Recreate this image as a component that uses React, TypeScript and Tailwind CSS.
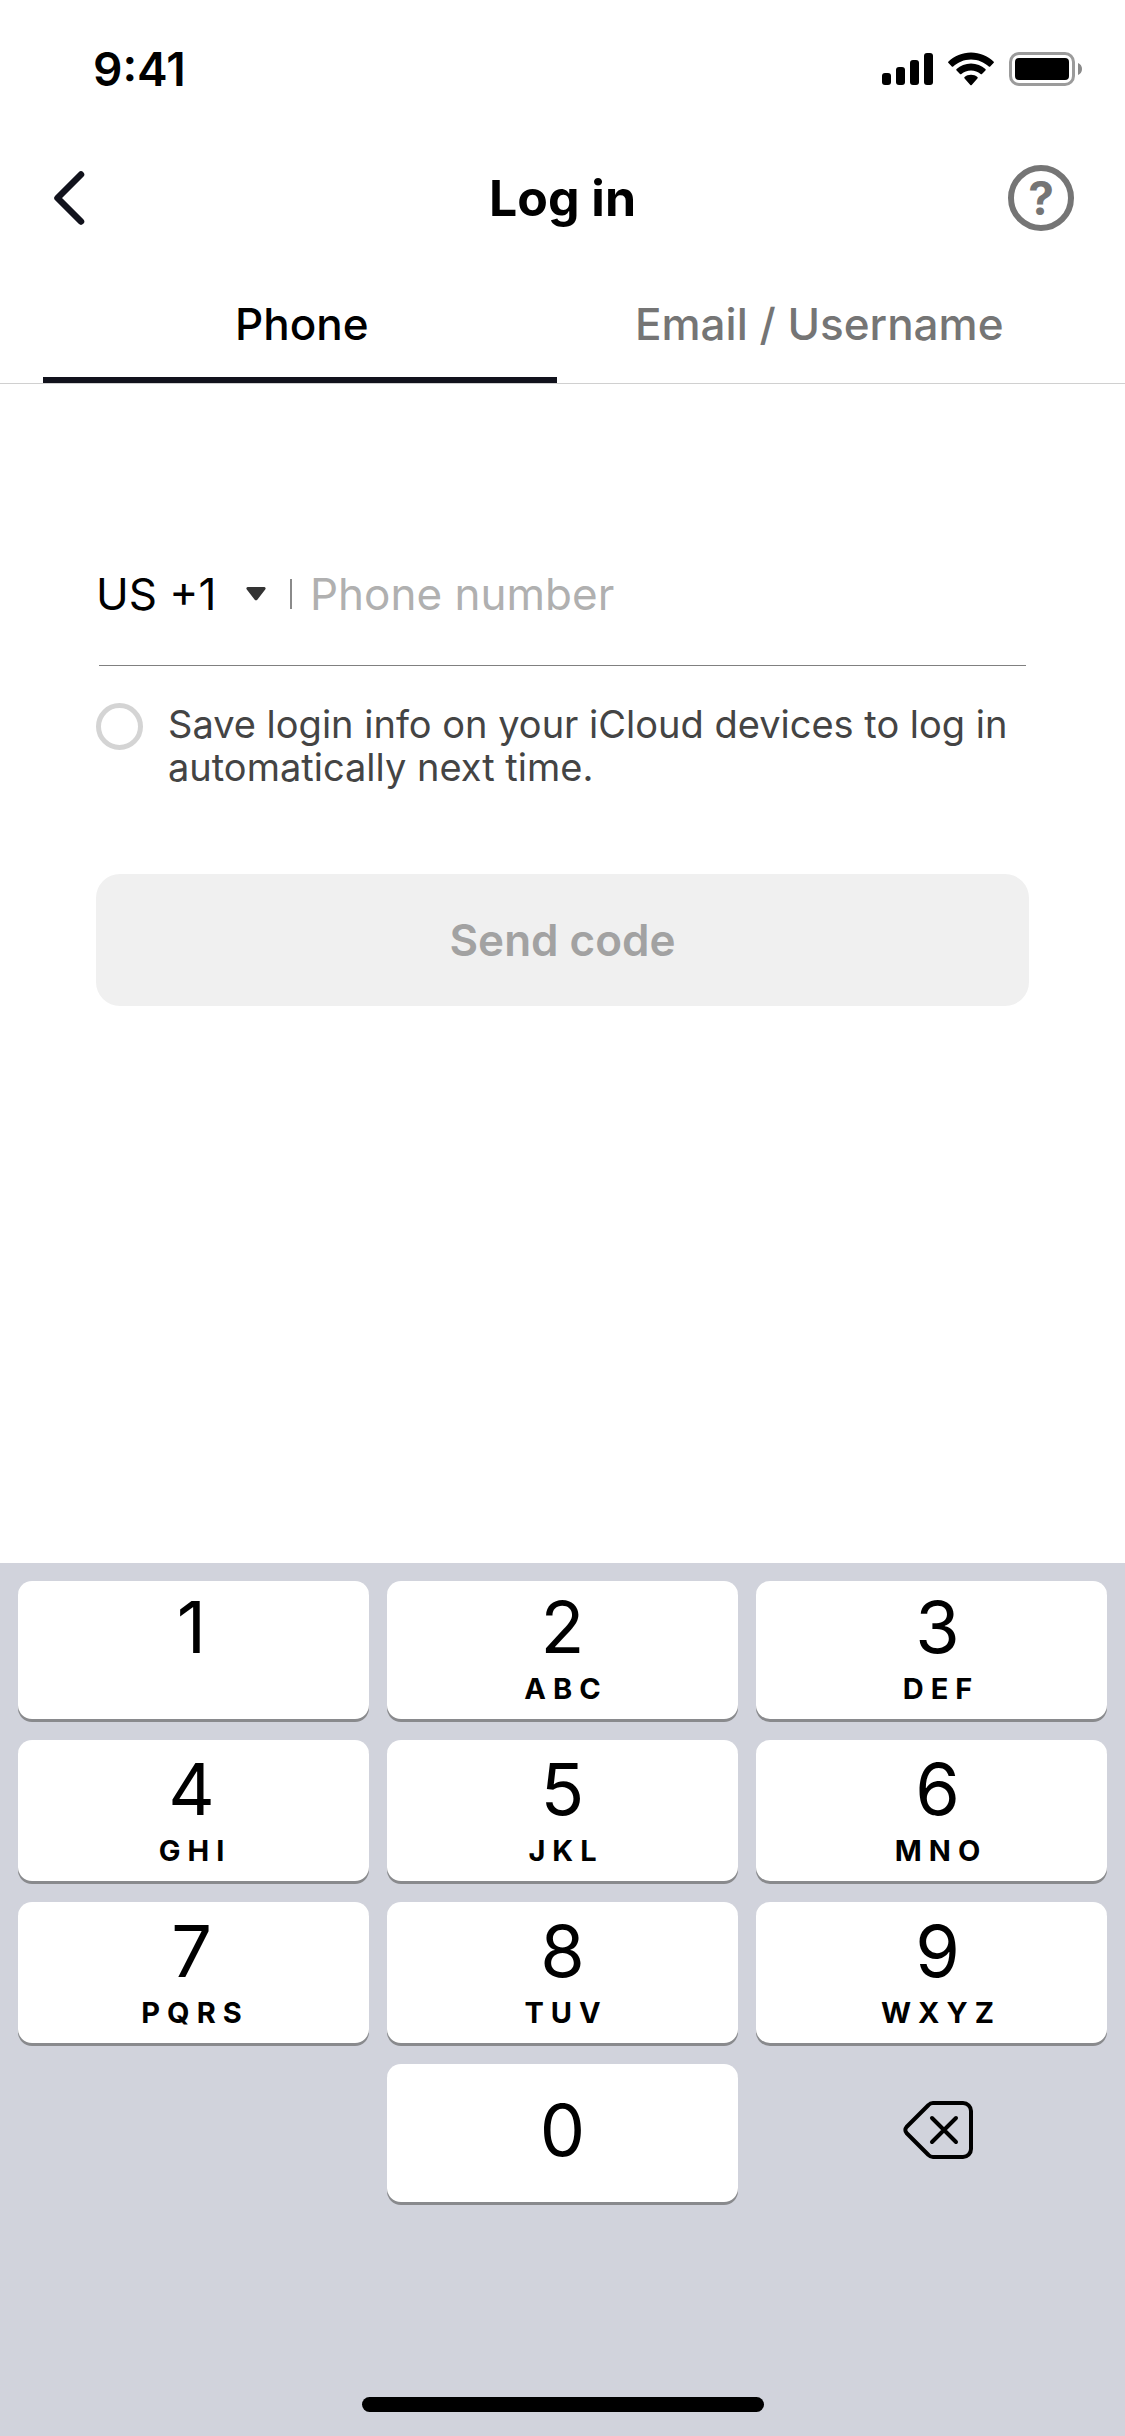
import { useState } from 'react';
import { clsx } from 'clsx';

type Tab = 'phone' | 'email';

interface KeyDef {
  digit: string;
  letters: string;
}

const KEYS: KeyDef[] = [
  { digit: '1', letters: '' },
  { digit: '2', letters: 'ABC' },
  { digit: '3', letters: 'DEF' },
  { digit: '4', letters: 'GHI' },
  { digit: '5', letters: 'JKL' },
  { digit: '6', letters: 'MNO' },
  { digit: '7', letters: 'PQRS' },
  { digit: '8', letters: 'TUV' },
  { digit: '9', letters: 'WXYZ' },
];

function StatusBar() {
  return (
    <div className="flex h-[132px] items-center justify-between pt-1.5 pr-[42px] pl-[93px]">
      <span className="text-[46px] leading-[48px] font-semibold">9:41</span>
      <div className="flex items-center gap-[15px]">
        <svg width="51" height="34" viewBox="0 0 51 34" aria-hidden="true">
          <rect x="0" y="21" width="9" height="12" rx="3" />
          <rect x="14" y="15" width="9" height="18" rx="3" />
          <rect x="28" y="8" width="9" height="25" rx="3" />
          <rect x="42" y="1" width="9" height="32" rx="3" />
        </svg>
        <svg width="46" height="34" viewBox="0 0 46 34" aria-hidden="true">
          <path d="M23 0.5C31.8 0.5 39.7 4 45.5 9.6a1 1 0 0 1 0 1.5L42.2 14.5a1 1 0 0 1-1.4 0C36.1 10.2 29.9 7.4 23 7.4S9.9 10.2 5.2 14.5a1 1 0 0 1-1.4 0L0.5 11.1a1 1 0 0 1 0-1.5C6.3 4 14.2 0.5 23 0.5Z" />
          <path d="M23 11.5c5.6 0 10.6 2.1 14.4 5.6a1 1 0 0 1 0 1.5L34 22a1 1 0 0 1-1.4 0C30 19.8 26.7 18.4 23 18.4S16 19.8 13.4 22a1 1 0 0 1-1.4 0L8.6 18.6a1 1 0 0 1 0-1.5C12.4 13.6 17.4 11.5 23 11.5Z" />
          <path d="M23 22.7c2.5 0 4.7.9 6.4 2.3a1 1 0 0 1 0 1.5L23.7 33a1 1 0 0 1-1.4 0L16.6 26.5a1 1 0 0 1 0-1.5C18.3 23.6 20.5 22.7 23 22.7Z" />
        </svg>
        <svg width="74" height="34" viewBox="0 0 74 34" aria-hidden="true">
          <rect x="1.5" y="1.5" width="63" height="31" rx="8.5" fill="none" stroke="#9b9b9b" strokeWidth="3" />
          <rect x="6" y="6" width="54" height="22" rx="4" />
          <path d="M69 11c2.5 1 4 3.3 4 6s-1.5 5-4 6Z" fill="#8a8a8a" />
        </svg>
      </div>
    </div>
  );
}

function Header() {
  return (
    <header className="grid h-[132px] grid-cols-[1fr_auto_1fr] items-center px-[51px]">
      <button type="button" aria-label="Back" className="justify-self-start">
        <svg width="36" height="60" viewBox="0 0 36 60" fill="none" aria-hidden="true">
          <path d="M30 6.5 6.500 30 30 53.5" stroke="#11121c" strokeWidth="6.500" strokeLinecap="round" strokeLinejoin="round" />
        </svg>
      </button>
      <h1 className="text-[50px] leading-[60px] font-bold">Log in</h1>
      <button
        type="button"
        aria-label="Help"
        className="flex size-[66px] items-center justify-center justify-self-end rounded-full border-[6px] border-[#757575] text-[46px] leading-[48px] font-bold text-[#757575]"
      >
        ?
      </button>
    </header>
  );
}

interface TabButtonProps {
  label: string;
  active: boolean;
  onClick: () => void;
}

function TabButton({ label, active, onClick }: TabButtonProps) {
  return (
    <button
      type="button"
      role="tab"
      aria-selected={active}
      onClick={onClick}
      className={clsx(
        'flex flex-1 flex-col text-center text-[44px] leading-[48px] font-medium',
        active ? 'text-black' : 'text-[#757575]',
      )}
    >
      <span className="flex w-full flex-1 items-center justify-center pt-1.5">{label}</span>
      <span className={clsx('mr-1 h-1.5 self-stretch', active && 'bg-[#11121c]')} />
    </button>
  );
}

function Keypad({ onDigit, onDelete }: { onDigit: (d: string) => void; onDelete: () => void }) {
  return (
    <div className="bg-[#d1d3dc] px-[18px] pt-[18px] pb-6">
      <div className="grid grid-cols-3 grid-rows-[138px_141px_141px_138px] gap-x-[18px] gap-y-[21px]">
        {KEYS.map(({ digit, letters }, i) => (
          <button
            key={digit}
            type="button"
            onClick={() => onDigit(digit)}
            className={clsx(
              'flex flex-col items-center justify-end rounded-[14px] bg-white pb-3 shadow-[0_3px_0_#898a8d]',
              i % 3 === 0 && 'pr-1',
              i % 3 === 2 && 'pl-3',
            )}
          >
            <span className="text-[72px] leading-[88px]">{digit}</span>
            <span className="h-9 pl-[7px] text-[29px] leading-[36px] font-bold tracking-[7px]">{letters}</span>
          </button>
        ))}
        <button
          type="button"
          onClick={() => onDigit('0')}
          className="col-start-2 flex items-center justify-center rounded-[14px] bg-white pb-1.5 text-[72px] leading-[88px] shadow-[0_3px_0_#898a8d]"
        >
          0
        </button>
        <button type="button" aria-label="Delete" onClick={onDelete} className="flex items-center justify-center pb-1.5 pl-3">
          <svg width="70" height="60" viewBox="0 0 70 60" fill="none" stroke="#000" strokeWidth="4" strokeLinecap="round" strokeLinejoin="round" aria-hidden="true">
            <path d="M30 3h30a8 8 0 0 1 8 8v38a8 8 0 0 1-8 8H30a6 6 0 0 1-4.5-2L3.5 33a4.5 4.5 0 0 1 0-6L25.5 5A6 6 0 0 1 30 3Z" />
            <path d="M29 18 53 42M53 18 29 42" />
          </svg>
        </button>
      </div>
      {/* Home indicator */}
      <div className="mx-auto mt-[195px] h-[15px] w-[402px] rounded-full bg-black" />
    </div>
  );
}

export default function App() {
  const [tab, setTab] = useState<Tab>('phone');
  const [phone, setPhone] = useState('');

  return (
    <div className="flex min-h-screen flex-col bg-white font-[Inter,sans-serif] text-black">
      <StatusBar />
      <Header />
      <div role="tablist" className="flex h-[120px] border-b border-[#d0d0d0] pr-[47px] pl-[43px]">
        <TabButton label="Phone" active={tab === 'phone'} onClick={() => setTab('phone')} />
        <TabButton label="Email / Username" active={tab === 'email'} onClick={() => setTab('email')} />
      </div>

      <form className="flex-1 px-24 pt-[138px]" onSubmit={(e) => e.preventDefault()}>
        <div className="flex h-[143px] items-center text-[44px] leading-[52px]">
          <div className="relative flex items-center">
            <select aria-label="Country code" className="appearance-none bg-transparent pr-[49px]">
              <option>US +1</option>
            </select>
            <svg className="pointer-events-none absolute right-0" width="20" height="14" viewBox="0 0 20 14" aria-hidden="true">
              <path d="M2 0h16a1.5 1.5 0 0 1 1.2 2.5L11.5 12.5a2 2 0 0 1-3 0L.8 2.5A1.5 1.5 0 0 1 2 0Z" fill="#333" />
            </svg>
          </div>
          <div className="mr-[18px] ml-6 h-[30px] w-0.5 bg-[#8a8a8a]" />
          <input
            type="tel"
            aria-label="Phone number"
            placeholder="Phone number"
            value={phone}
            onChange={(e) => setPhone(e.target.value)}
            className="min-w-0 flex-1 outline-none placeholder:text-[#b0b0b0]"
          />
        </div>
        <hr className="mx-[3px] border-[#808080]" />

        <label className="mt-[37px] flex items-start gap-[25px] text-[38px] leading-[43px] text-[#444]">
          <input type="checkbox" className="size-[47px] shrink-0 appearance-none rounded-full border-[5px] border-[#d4d4d4] checked:bg-[#fe2c55]" />
          <span>Save login info on your iCloud devices to log in automatically next time.</span>
        </label>

        <button
          type="submit"
          className="mt-[85px] h-[132px] w-full rounded-3xl bg-[#f0f0f0] text-[44px] leading-[52px] font-semibold text-[#a2a2a2]"
        >
          Send code
        </button>
      </form>

      <Keypad onDigit={(d) => setPhone((p) => p + d)} onDelete={() => setPhone((p) => p.slice(0, -1))} />
    </div>
  );
}
